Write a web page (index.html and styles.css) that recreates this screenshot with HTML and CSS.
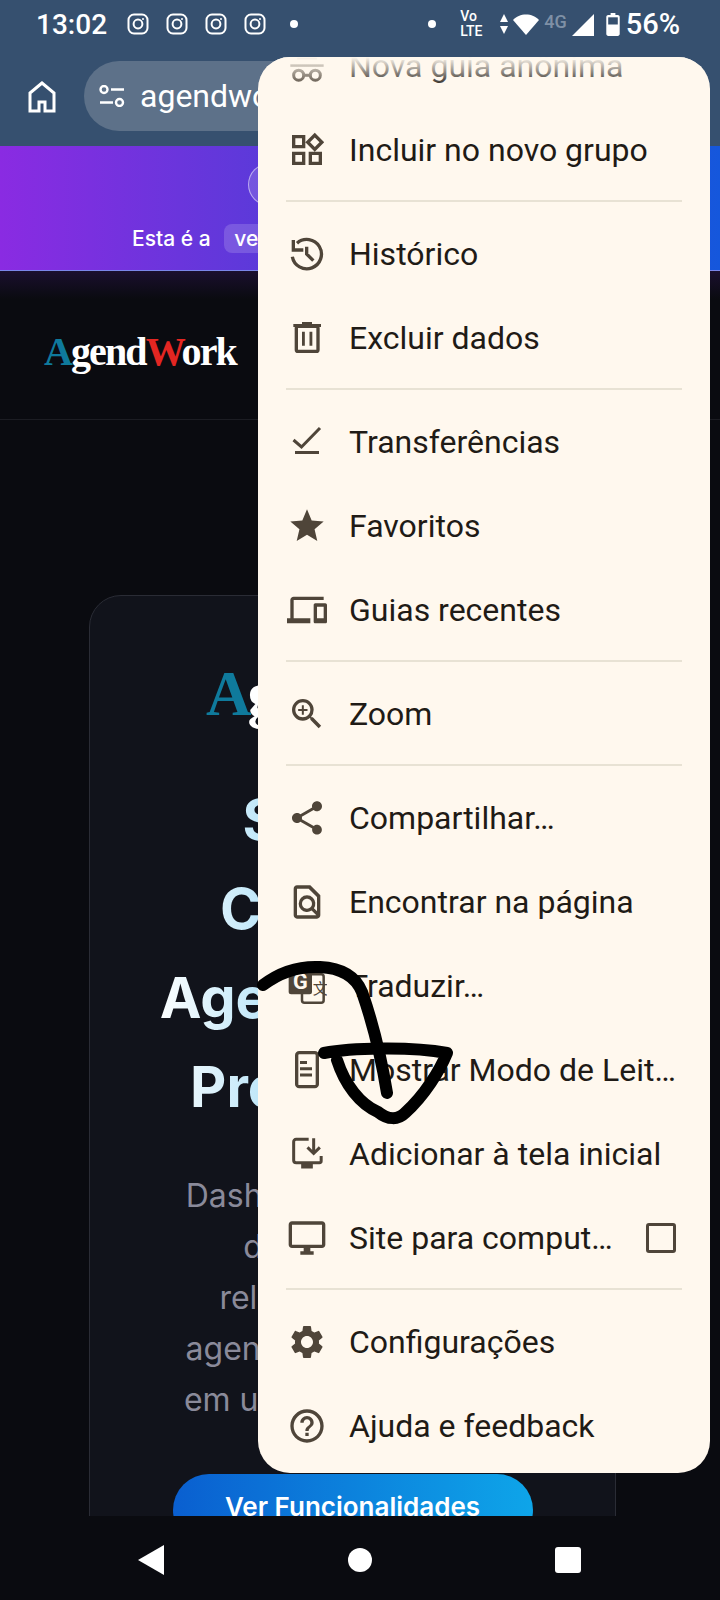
FILE: index.html
```html
<!DOCTYPE html>
<html lang="pt-BR">
<head>
  <meta charset="UTF-8" />
  <meta name="viewport" content="width=device-width, initial-scale=1.0"/>
  <title>AgendWork</title>
  <link rel="stylesheet" href="styles.css">
</head>
<body>
  <div class="phone">
    <div class="browser-top">
      <div class="status-bar">
        <span class="clock">13:02</span>
        <div class="notif-icons">
          <svg viewBox="0 0 24 24"><rect x="2.5" y="2.5" width="19" height="19" rx="5.5"/><circle cx="12" cy="12" r="4.4"/><circle class="dot-fill" cx="17" cy="7" r="1"/></svg>
          <svg viewBox="0 0 24 24"><rect x="2.5" y="2.5" width="19" height="19" rx="5.5"/><circle cx="12" cy="12" r="4.4"/><circle class="dot-fill" cx="17" cy="7" r="1"/></svg>
          <svg viewBox="0 0 24 24"><rect x="2.5" y="2.5" width="19" height="19" rx="5.5"/><circle cx="12" cy="12" r="4.4"/><circle class="dot-fill" cx="17" cy="7" r="1"/></svg>
          <svg viewBox="0 0 24 24"><rect x="2.5" y="2.5" width="19" height="19" rx="5.5"/><circle cx="12" cy="12" r="4.4"/><circle class="dot-fill" cx="17" cy="7" r="1"/></svg>
          <i class="status-dot"></i>
        </div>
        <div class="sys-icons">
          <i class="status-dot"></i>
          <div class="volte"><span>Vo</span><span>LTE</span></div>
          <svg class="updown" viewBox="0 0 10 22"><path d="M5 1l4 8H1zM5 21l4-8H1z"/></svg>
          <svg class="wifi" viewBox="0 0 26 21"><path d="M0 6C3 2.500 8 0.500 13 0.500S23 2.500 26 6L13 21z"/></svg>
          <span class="net">4G</span>
          <svg class="signal" viewBox="0 0 22 22"><path d="M22 0v22H0z"/></svg>
          <svg class="battery" viewBox="0 0 14 24"><path d="M4.500 0h5v2H12c1 0 2 1 2 2v18c0 1-1 2-2 2H2c-1 0-2-1-2-2V4c0-1 1-2 2-2h2.500z"/><rect class="batt-empty" x="2" y="4.500" width="10" height="7.500"/></svg>
          <span class="battery-pct">56%</span>
        </div>
      </div>
      <div class="toolbar">
        <svg class="home-icon" viewBox="0 0 28 32"><path d="M14 2L2 12v18h9v-9h6v9h9V12z"/></svg>
        <div class="omnibox">
          <svg class="tune-icon" viewBox="0 0 26 22"><circle cx="5" cy="4.500" r="3.500"/><path d="M12 4.500h13M1 17.500h13"/><circle cx="20.500" cy="17.500" r="3.500"/></svg>
          <span>agendwork.com.br</span>
        </div>
      </div>
    </div>

    <div class="promo">
      <div class="promo-pill">Versão de demonstração</div>
      <div class="promo-text">Esta é a <span class="promo-tag">versão</span> de teste</div>
    </div>

    <div class="site">
      <header class="site-header">
        <div class="logo"><span class="logo-a">A</span>gend<span class="logo-w">W</span>ork</div>
      </header>
      <section class="hero">
        <div class="hero-logo"><span class="logo-a">A</span>gend<span class="logo-w">W</span>ork</div>
        <h1>Sistema<br>Completo<br>Agendamento<br>Profissional</h1>
        <p>Dashboard de gestão,<br>de clientes, os<br>relatórios simples<br>agendamentos online,<br>em uma só plataforma</p>
        <a class="hero-btn">Ver Funcionalidades</a>
      </section>
    </div>

    <div class="nav-bar">
      <svg class="nav-back" viewBox="0 0 26 30"><path d="M26 0v30L0 15z"/></svg>
      <i class="nav-home"></i>
      <i class="nav-recent"></i>
    </div>

    <!-- overflow menu -->
    <div class="menu">
      <div class="menu-fade"></div>
      <div class="menu-list">
        <div class="menu-item dim">
          <svg viewBox="0 0 24 24"><path d="M2 11h20v1.500H2zM6 8l1-5h10l1 5z"/><path class="line" d="M10 17.500h4"/><circle class="line" cx="7" cy="17.500" r="3"/><circle class="line" cx="17" cy="17.500" r="3"/></svg>
          <span>Nova guia anônima</span>
        </div>
        <div class="menu-item">
          <svg viewBox="0 0 24 24"><path d="M16.660 4.520l2.830 2.830-2.830 2.830-2.830-2.830 2.830-2.830M9 5v4H5V5h4m10 10v4h-4v-4h4M9 15v4H5v-4h4m7.660-13.310L11 7.340 16.660 13l5.660-5.660-5.660-5.650zM11 3H3v8h8V3zm10 10h-8v8h8v-8zm-10 0H3v8h8v-8z"/></svg>
          <span>Incluir no novo grupo</span>
        </div>
        <div class="menu-divider"></div>
        <div class="menu-item">
          <svg viewBox="0 0 24 24"><path class="line thick" d="M3.800 3.600v6h6M6 5.500A8.800 8.800 0 1 1 3.200 13.600M11.800 7.600V12l4 4"/></svg>
          <span>Histórico</span>
        </div>
        <div class="menu-item">
          <svg viewBox="0 0 24 24"><path d="M9 2.400h6v1.200h5.400v1.800H3.800V3.600H9z"/><rect class="line thick" x="5.600" y="5" width="13" height="15" rx="1"/><path d="M9 8.200h1.700v8.400H9zM13.500 8.200h1.700v8.400h-1.700z"/></svg>
          <span>Excluir dados</span>
        </div>
        <div class="menu-divider"></div>
        <div class="menu-item">
          <svg viewBox="0 0 24 24"><path class="line" d="M3.900 10.800l4.800 4.200L19.800 3.600M4.800 18.300h14.400"/></svg>
          <span>Transferências</span>
        </div>
        <div class="menu-item">
          <svg viewBox="0 0 24 24"><path d="M12 17.270L18.180 21l-1.640-7.030L22 9.240l-7.190-.61L12 2 9.190 8.630 2 9.240l5.460 4.730L5.820 21z"/></svg>
          <span>Favoritos</span>
        </div>
        <div class="menu-item">
          <svg viewBox="0 0 24 24"><path d="M4 6h18V4H4c-1.100 0-2 .9-2 2v11H0v3h14v-3H4V6zm19 2h-6c-.55 0-1 .45-1 1v10c0 .55.45 1 1 1h6c.55 0 1-.45 1-1V9c0-.55-.45-1-1-1zm-1 9h-4v-7h4v7z"/></svg>
          <span>Guias recentes</span>
        </div>
        <div class="menu-divider"></div>
        <div class="menu-item">
          <svg viewBox="0 0 24 24"><path d="M15.500 14h-.79l-.28-.27A6.471 6.471 0 0 0 16 9.500 6.500 6.500 0 1 0 9.500 16c1.610 0 3.090-.59 4.230-1.570l.27.28v.79l5 4.990L20.490 19l-4.990-5zm-6 0C7.010 14 5 11.990 5 9.500S7.010 5 9.500 5 14 7.010 14 9.500 11.990 14 9.500 14z"/><path d="M12.300 10.200h-2.200v2.200H8.900v-2.200H6.700V9h2.200V6.800h1.200V9h2.200z"/></svg>
          <span>Zoom</span>
        </div>
        <div class="menu-divider"></div>
        <div class="menu-item">
          <svg viewBox="0 0 24 24"><path d="M18 16.080c-.76 0-1.440.3-1.960.77L8.910 12.700c.05-.23.09-.46.09-.7s-.04-.47-.09-.7l7.050-4.110c.54.5 1.250.81 2.040.81 1.660 0 3-1.340 3-3s-1.340-3-3-3-3 1.340-3 3c0 .24.04.47.09.7L8.040 9.810C7.500 9.310 6.790 9 6 9c-1.660 0-3 1.340-3 3s1.340 3 3 3c.79 0 1.500-.31 2.040-.81l7.120 4.160c-.05.21-.08.43-.08.65 0 1.610 1.310 2.920 2.920 2.920 1.610 0 2.920-1.310 2.920-2.920s-1.310-2.920-2.920-2.920z"/></svg>
          <span>Compartilhar…</span>
        </div>
        <div class="menu-item">
          <svg viewBox="0 0 24 24"><path d="M14 2H6c-1.100 0-2 .9-2 2v16c0 1.100.9 2 2 2h12c1.100 0 2-.9 2-2V8l-6-6zM6 4h7l5 5v8.580l-1.840-1.840a4.992 4.992 0 0 0-.64-6.280A4.960 4.960 0 0 0 12 8a5 5 0 0 0-3.530 1.460 4.980 4.980 0 0 0 0 7.050 4.982 4.982 0 0 0 6.280.63L17.600 20H6V4zm8.110 11.100c-.56.56-1.310.88-2.110.88s-1.550-.31-2.110-.88c-.56-.56-.88-1.310-.88-2.110s.31-1.550.88-2.110c.56-.57 1.310-.88 2.110-.88s1.550.31 2.110.88c.56.56.88 1.310.88 2.110s-.31 1.550-.88 2.110z"/></svg>
          <span>Encontrar na página</span>
        </div>
        <div class="menu-item">
          <svg class="wide" viewBox="0 0 24 24"><rect class="line-thin" x="9" y="5" width="13" height="17" rx="1.500"/><rect x="1" y="2" width="14" height="15" rx="1.500"/><text class="translate-g" x="8" y="14">G</text><text class="translate-x" x="15.500" y="17">文</text></svg>
          <span>Traduzir…</span>
        </div>
        <div class="menu-item">
          <svg viewBox="0 0 24 24"><rect class="line thick" x="5.800" y="1.600" width="12.400" height="20.400" rx="1.500"/><path class="line" d="M7.800 7.500H12M7.800 11.200H15M7.800 15H15"/></svg>
          <span>Mostrar Modo de Leit…</span>
        </div>
        <div class="menu-item">
          <svg viewBox="0 0 24 24"><path class="line" d="M13 3.200H5.500c-.9 0-1.500.6-1.500 1.500v11c0 .9.6 1.500 1.500 1.500h14c.6 0 1-.4 1-1v-3"/><path class="line" d="M16 2.500v9M12.300 8l3.700 3.700L19.700 8"/><path d="M8.500 17.500h7v3.200h-7z"/></svg>
          <span>Adicionar à tela inicial</span>
        </div>
        <div class="menu-item">
          <svg viewBox="0 0 24 24"><path d="M21 2H3c-1.100 0-2 .9-2 2v12c0 1.100.9 2 2 2h7v2H8v2h8v-2h-2v-2h7c1.100 0 2-.9 2-2V4c0-1.100-.9-2-2-2zm0 14H3V4h18v12z"/></svg>
          <span>Site para comput…</span>
          <i class="checkbox"></i>
        </div>
        <div class="menu-divider"></div>
        <div class="menu-item">
          <svg viewBox="0 0 24 24"><path d="M19.140 12.940c.04-.3.06-.61.06-.94 0-.32-.02-.64-.07-.94l2.030-1.580a.49.49 0 0 0 .12-.61l-1.920-3.320a.488.488 0 0 0-.59-.22l-2.390.96c-.5-.38-1.030-.7-1.620-.94l-.36-2.540a.484.484 0 0 0-.48-.41h-3.840c-.24 0-.43.17-.47.41l-.36 2.540c-.59.24-1.130.57-1.620.94l-2.390-.96c-.22-.08-.47 0-.59.22L2.740 8.870c-.12.21-.08.47.12.61l2.030 1.580c-.05.3-.09.63-.09.94s.02.64.07.94l-2.030 1.580a.49.49 0 0 0-.12.61l1.920 3.320c.12.22.37.29.59.22l2.390-.96c.5.38 1.030.7 1.620.94l.36 2.540c.05.24.24.41.48.41h3.840c.24 0 .44-.17.47-.41l.36-2.540c.59-.24 1.130-.56 1.620-.94l2.390.96c.22.08.47 0 .59-.22l1.920-3.320c.12-.22.07-.47-.12-.61l-2.010-1.580zM12 15.600c-1.980 0-3.600-1.620-3.600-3.600s1.620-3.600 3.600-3.600 3.600 1.620 3.600 3.600-1.620 3.600-3.600 3.600z"/></svg>
          <span>Configurações</span>
        </div>
        <div class="menu-item">
          <svg viewBox="0 0 24 24"><path d="M11 18h2v-2h-2v2zm1-16C6.480 2 2 6.480 2 12s4.480 10 10 10 10-4.480 10-10S17.520 2 12 2zm0 18c-4.410 0-8-3.590-8-8s3.590-8 8-8 8 3.590 8 8-3.590 8-8 8zm0-14c-2.210 0-4 1.790-4 4h2c0-1.100.9-2 2-2s2 .9 2 2c0 2-3 1.750-3 5h2c0-2.250 3-2.500 3-5 0-2.210-1.790-4-4-4z"/></svg>
          <span>Ajuda e feedback</span>
        </div>
      </div>
    </div>

    <!-- marker scribble on top of the screenshot -->
    <svg class="scribble" viewBox="0 0 720 1600">
      <path d="M263 985C280 972 300 966 320 967C340 968 355 975 362 992C370 1015 380 1050 387 1093"/>
      <path d="M324 1053C350 1048 410 1046 447 1053C440 1070 425 1095 405 1113C398 1120 388 1120 378 1112C360 1104 345 1085 337 1060"/>
    </svg>
  </div>
</body>
</html>
```

FILE: styles.css
```css
* {
  box-sizing: border-box;
}

body {
  margin: 0;
  background: #0a0b10;
  font-family: Roboto, "Liberation Sans", sans-serif;
}

.phone {
  position: relative;
  width: 720px;
  height: 1600px;
  overflow: hidden;
  display: flex;
  flex-direction: column;
}

/* Status bar and toolbar */
.browser-top {
  height: 146px;
  flex: none;
  background: #36506f;
  color: #fff;
}

.status-bar {
  height: 48px;
  padding: 0 40px 0 36px;
  display: flex;
  align-items: center;
  justify-content: space-between;
}

.clock {
  font-size: 28px;
  font-weight: 500;
  width: 90px;
}

.notif-icons {
  display: flex;
  align-items: center;
  gap: 15px;
  margin-right: auto;
}

.notif-icons svg {
  width: 24px;
  height: 24px;
  fill: none;
  stroke: #fff;
  stroke-width: 2;
}

.notif-icons .dot-fill {
  fill: #fff;
  stroke: none;
}

.status-dot {
  display: block;
  width: 8px;
  height: 8px;
  border-radius: 50%;
  background: #fff;
}

.notif-icons .status-dot {
  margin-left: 8px;
}

.sys-icons {
  display: flex;
  align-items: center;
  gap: 6px;
}

.volte {
  display: flex;
  flex-direction: column;
  font-size: 14px;
  line-height: 15px;
  font-weight: 500;
  margin-left: 18px;
  width: 28px;
}

.updown {
  width: 10px;
  height: 22px;
  fill: #fff;
  margin-left: 5px;
}

.wifi {
  width: 26px;
  height: 21px;
  fill: #fff;
  margin-left: -2px;
}

.net {
  font-size: 18px;
  line-height: 18px;
  font-weight: 500;
  color: #7f90a6;
  align-self: flex-start;
  margin: 6px -1px 0 -1px;
}

.signal {
  width: 22px;
  height: 22px;
  fill: #fff;
  margin-top: 2px;
}

.battery {
  width: 14px;
  height: 23px;
  fill: #fff;
  margin-left: 6px;
}

.battery-pct {
  font-size: 29px;
  font-weight: 500;
}

.batt-empty {
  fill: #36506f;
}

.toolbar {
  height: 98px;
  padding: 13px 0 15px 28px;
  display: flex;
  align-items: center;
}

.home-icon {
  width: 28px;
  height: 32px;
  fill: none;
  stroke: #fff;
  stroke-width: 3;
  flex: none;
  margin-top: 2px;
}

.omnibox {
  margin-left: 28px;
  width: 500px;
  height: 70px;
  border-radius: 35px;
  background: #5d7189;
  padding-left: 15px;
  display: flex;
  align-items: center;
  gap: 15px;
  font-size: 32px;
  white-space: nowrap;
}

.tune-icon {
  width: 26px;
  height: 22px;
  fill: none;
  stroke: #fff;
  stroke-width: 2.4;
}

/* Promo banner */
.promo {
  height: 125px;
  flex: none;
  background: linear-gradient(90deg, #8a2be2 0%, #4a3fd6 50%, #1557dc 100%);
  border-bottom: 1px solid #7a86e8;
  color: #fff;
  font-family: Inter, sans-serif;
  display: flex;
  flex-direction: column;
  align-items: center;
  padding-top: 17px;
}

.promo-pill {
  height: 43px;
  padding: 0 24px;
  margin-bottom: 18px;
  border-radius: 22px;
  border: 1px solid rgba(255, 255, 255, 0.5);
  background: rgba(255, 255, 255, 0.15);
  font-size: 18px;
  line-height: 41px;
  width: 225px;
  white-space: nowrap;
  overflow: hidden;
}

.promo-text {
  align-self: flex-start;
  margin-left: 132px;
  font-size: 21px;
  font-weight: 500;
  line-height: 29px;
  white-space: nowrap;
}

.promo-tag {
  display: inline-block;
  margin-left: 8px;
  padding: 0 10px;
  border-radius: 8px;
  background: rgba(255, 255, 255, 0.16);
}

/* Site behind the menu */
.site {
  flex: 1;
  min-height: 0;
  overflow: hidden;
  background: linear-gradient(180deg, #1a0f2e 0, #0a0b10 28px);
}

.site-header {
  height: 149px;
  border-bottom: 1px solid #1c1d23;
  padding-left: 44px;
  display: flex;
  align-items: center;
}

.logo,
.hero-logo {
  font-family: "Liberation Serif", serif;
  font-weight: 700;
  color: #fff;
  white-space: nowrap;
}

.logo {
  font-size: 40px;
  letter-spacing: -1.900px;
  margin-top: 12px;
}

.logo-a {
  color: #0f7a9c;
}

.logo-w {
  color: #e32622;
}

.hero {
  width: 527px;
  margin: 175px 0 0 89px;
  height: 1000px;
  background: #11131b;
  border: 1px solid #2a2c35;
  border-radius: 32px;
  text-align: center;
  padding-top: 60px;
}

.hero-logo {
  font-size: 63px;
  letter-spacing: -4px;
  line-height: 76px;
}

.hero h1 {
  margin: 44px 0 0;
  font-family: Inter, sans-serif;
  font-size: 56px;
  font-weight: 700;
  line-height: 89px;
  color: transparent;
  background: linear-gradient(90deg, #fff 12%, #b5e3f8 36%);
  -webkit-background-clip: text;
  background-clip: text;
}

.hero p {
  margin: 38px 0 0;
  font-family: Inter, sans-serif;
  font-size: 32px;
  line-height: 51px;
  color: #8a8a9a;
  white-space: nowrap;
}

.hero-btn {
  display: block;
  width: 360px;
  height: 72px;
  margin: 49px auto 0;
  border-radius: 36px;
  background: linear-gradient(90deg, #0a5fd0, #0ea5e9);
  color: #fff;
  font-family: Inter, sans-serif;
  font-size: 26px;
  font-weight: 600;
  line-height: 66px;
}

/* Android nav bar */
.nav-bar {
  height: 84px;
  flex: none;
  background: #0a0b10;
  display: flex;
  align-items: center;
  padding-top: 4px;
}

.nav-back {
  width: 26px;
  height: 30px;
  fill: #fff;
  margin-left: 138px;
}

.nav-home {
  width: 24px;
  height: 24px;
  border-radius: 50%;
  background: #fff;
  margin-left: 184px;
}

.nav-recent {
  width: 26px;
  height: 26px;
  border-radius: 3px;
  background: #fff;
  margin-left: 183px;
}

/* Overflow menu */
.menu {
  position: absolute;
  left: 258px;
  top: 57px;
  width: 452px;
  height: 1416px;
  background: #fff8ee;
  border-radius: 32px;
  overflow: hidden;
  color: #1f1b16;
}

.menu-fade {
  position: absolute;
  left: 0;
  right: 0;
  top: 0;
  height: 30px;
  background: linear-gradient(180deg, #fff8ee 0%, rgba(255, 248, 238, 0) 100%);
}

.menu-list {
  margin-top: -33px;
}

.menu-item {
  height: 84px;
  padding: 0 34px 0 29px;
  display: flex;
  align-items: center;
  font-size: 32px;
  white-space: nowrap;
}

.menu-item svg {
  width: 40px;
  height: 40px;
  flex: none;
  margin-right: 22px;
  fill: #4f4539;
}

.menu-item .line {
  fill: none;
  stroke: #4f4539;
  stroke-width: 1.800;
}

.menu-item .thick {
  stroke-width: 2;
}

.menu-item .line-thin {
  fill: #fff8ee;
  stroke: #4f4539;
  stroke-width: 1.500;
}

.translate-g {
  fill: #fff8ee;
  font-size: 13px;
  font-weight: 700;
  text-anchor: middle;
}

.translate-x {
  fill: #4f4539;
  font-family: "Noto Sans CJK SC", sans-serif;
  font-size: 9px;
}

.menu-divider {
  height: 20px;
  margin: 0 28px;
  padding-bottom: 2px;
  display: flex;
  align-items: center;
}

.menu-divider::before {
  content: "";
  display: block;
  width: 100%;
  height: 2px;
  background: #e8e2d4;
}

.checkbox {
  display: block;
  width: 30px;
  height: 30px;
  margin-left: auto;
  border: 3px solid #4f4539;
  border-radius: 3px;
}

.scribble {
  position: absolute;
  left: 0;
  top: 0;
  width: 720px;
  height: 1600px;
  fill: none;
  stroke: #000;
  stroke-width: 12;
  stroke-linecap: round;
  stroke-linejoin: round;
  pointer-events: none;
}
```
